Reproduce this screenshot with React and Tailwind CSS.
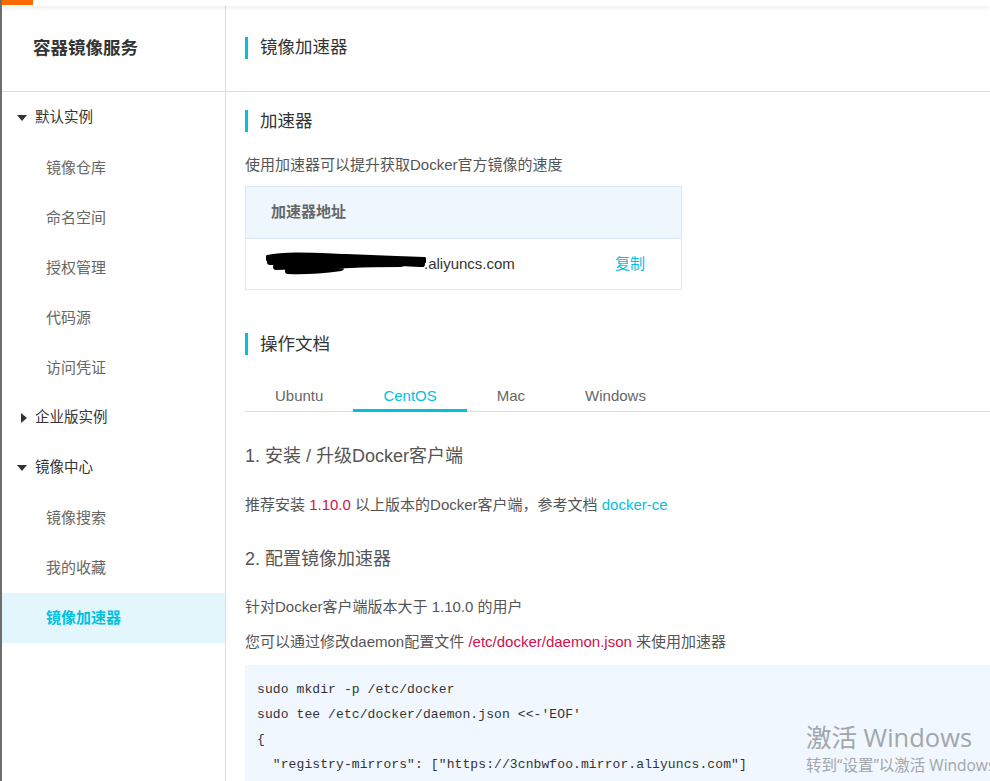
import React from "react";

const FONT = { fontFamily: '"Liberation Sans", "Noto Sans CJK SC", sans-serif' };

function CaretDown() {
  return (
    <svg width="10" height="6" viewBox="0 0 10 6" className="shrink-0">
      <polygon points="0,0 10,0 5,6" fill="#333" />
    </svg>
  );
}

function CaretRight() {
  return (
    <svg width="6" height="10" viewBox="0 0 6 10" className="shrink-0 ml-[4px]">
      <polygon points="0,0 6,5 0,10" fill="#333" />
    </svg>
  );
}

const menu = [
  { label: "默认实例", top: true, open: true },
  { label: "镜像仓库" },
  { label: "命名空间" },
  { label: "授权管理" },
  { label: "代码源" },
  { label: "访问凭证" },
  { label: "企业版实例", top: true, open: false },
  { label: "镜像中心", top: true, open: true },
  { label: "镜像搜索" },
  { label: "我的收藏" },
  { label: "镜像加速器", active: true },
];

function Sidebar() {
  return (
    <aside className="w-[224px] shrink-0 border-r border-[#dddddd] flex flex-col">
      <div className="h-[86px] shrink-0 border-b border-[#dddddd] flex items-center pl-[31px] text-[17.5px] font-bold text-[#333]">
        容器镜像服务
      </div>
      <nav className="flex flex-col pt-[1px]">
        {menu.map((m) =>
          m.top ? (
            <div key={m.label} className="h-[50px] shrink-0 flex items-center pl-[15px] text-[14.5px] text-[#333]">
              <span className="w-[10px] flex items-center">{m.open ? <CaretDown /> : <CaretRight />}</span>
              <span className="ml-[8px]">{m.label}</span>
            </div>
          ) : (
            <div
              key={m.label}
              className={
                m.active
                  ? "h-[50px] shrink-0 flex items-center pl-[44px] text-[15px] bg-[#e3f6fb] text-[#00c1de] font-bold"
                  : "h-[50px] shrink-0 flex items-center pl-[44px] text-[15px] text-[#666]"
              }
            >
              {m.label}
            </div>
          )
        )}
      </nav>
    </aside>
  );
}

function Heading({ children, className = "" }) {
  return (
    <div className={"h-[22px] shrink-0 flex items-center " + className}>
      <span className="w-[3px] h-[22px] bg-[#00c1de]" />
      <span className="ml-[12px] text-[17.5px] text-[#333]">{children}</span>
    </div>
  );
}

function Scribble() {
  return (
    <svg width="160" height="28" viewBox="0 0 160 28" className="shrink-0">
      <path
        d="M2 8 C20 4 50 6 80 7 C110 8 130 9 158 10 M4 12 C30 10 60 12 90 12 C115 12 135 13 156 14 M10 17 C35 16 60 16 85 15 C105 14 120 14 135 14 M22 21 C40 22 60 20 75 18"
        stroke="#000"
        strokeWidth="6"
        fill="none"
        strokeLinecap="round"
      />
    </svg>
  );
}

const tabs = ["Ubuntu", "CentOS", "Mac", "Windows"];

function Tabs() {
  return (
    <div className="mt-[27px] shrink-0 flex border-b border-[#dddddd]">
      {tabs.map((t) => (
        <div
          key={t}
          className={
            "relative h-[29px] px-[30px] flex items-center text-[15px] " +
            (t === "CentOS" ? "text-[#00c1de]" : "text-[#666]")
          }
        >
          {t}
          {t === "CentOS" && <span className="absolute left-0 right-0 bottom-[-1px] h-[3px] bg-[#00c1de]" />}
        </div>
      ))}
    </div>
  );
}

const code = [
  "sudo mkdir -p /etc/docker",
  "sudo tee /etc/docker/daemon.json <<-'EOF'",
  "{",
  '  "registry-mirrors": ["https://3cnbwfoo.mirror.aliyuncs.com"]',
  "}",
];

function Main() {
  return (
    <main className="flex-1 min-w-0 flex flex-col">
      <div className="h-[86px] shrink-0 border-b border-[#dddddd] flex items-center pl-[19px] pb-[2px]">
        <Heading>镜像加速器</Heading>
      </div>
      <div className="pl-[19px] flex flex-col">
        <Heading className="mt-[18px]">加速器</Heading>
        <p className="mt-[23px] text-[15px] leading-[20px] text-[#555]">使用加速器可以提升获取Docker官方镜像的速度</p>
        <div className="mt-[11px] w-[437px] shrink-0 border border-[#d9e9f8]">
          <div className="h-[51px] bg-[#eff7fe] flex items-center pl-[25px] text-[15px] font-semibold text-[#666]">
            加速器地址
          </div>
          <div className="h-[51px] border-t border-[#d9e9f8] bg-white flex items-center justify-between pl-[20px] pr-[36px] text-[15px]">
            <span className="flex items-center text-[#333]">
              <Scribble />
              <span className="-ml-[2px]">.aliyuncs.com</span>
            </span>
            <span className="text-[#00c1de]">复制</span>
          </div>
        </div>
        <Heading className="mt-[43px]">操作文档</Heading>
        <Tabs />
        <h3 className="mt-[32px] text-[18px] leading-[24px] text-[#555]">1. 安装 / 升级Docker客户端</h3>
        <p className="mt-[27px] text-[15px] leading-[20px] text-[#555]">
          推荐安装 <span className="text-[#d0104c]">1.10.0</span> 以上版本的Docker客户端，参考文档{" "}
          <span className="text-[#00c1de]">docker-ce</span>
        </p>
        <h3 className="mt-[32px] text-[18px] leading-[24px] text-[#555]">2. 配置镜像加速器</h3>
        <p className="mt-[26px] text-[15px] leading-[20px] text-[#555]">针对Docker客户端版本大于 1.10.0 的用户</p>
        <p className="mt-[15px] text-[15px] leading-[20px] text-[#555]">
          您可以通过修改daemon配置文件 <span className="text-[#d0104c]">/etc/docker/daemon.json</span> 来使用加速器
        </p>
        <pre
          className="mt-[13px] bg-[#f0f7fe] pt-[12px] pl-[12px] pb-[20px] text-[13px] leading-[25px] tracking-[0.1px] text-[#333]"
          style={{ fontFamily: '"Liberation Mono", monospace' }}
        >
          {code.join("\n")}
        </pre>
      </div>
    </main>
  );
}

export default function App() {
  return (
    <div className="relative w-[990px] h-[781px] overflow-hidden bg-white border-l-2 border-[#6e6e6e] flex flex-col" style={FONT}>
      <div className="relative z-10 h-[6px] shrink-0 bg-white shadow-[0_2px_5px_rgba(0,0,0,0.07)]">
        <div className="w-[31px] h-[5px] bg-[#ff6a00]" />
      </div>
      <div className="flex flex-1 min-h-0">
        <Sidebar />
        <Main />
      </div>
      <div className="absolute left-[804px] top-[721px] whitespace-nowrap text-[#a3a6a9] pointer-events-none" style={{ fontFamily: '"Open Sans", "Noto Sans CJK SC", sans-serif' }}>
        <div className="text-[25.5px] leading-[32px]">激活 Windows</div>
        <div className="text-[15.5px] leading-[20px] mt-[2px]">转到“设置”以激活 Windows</div>
      </div>
    </div>
  );
}
